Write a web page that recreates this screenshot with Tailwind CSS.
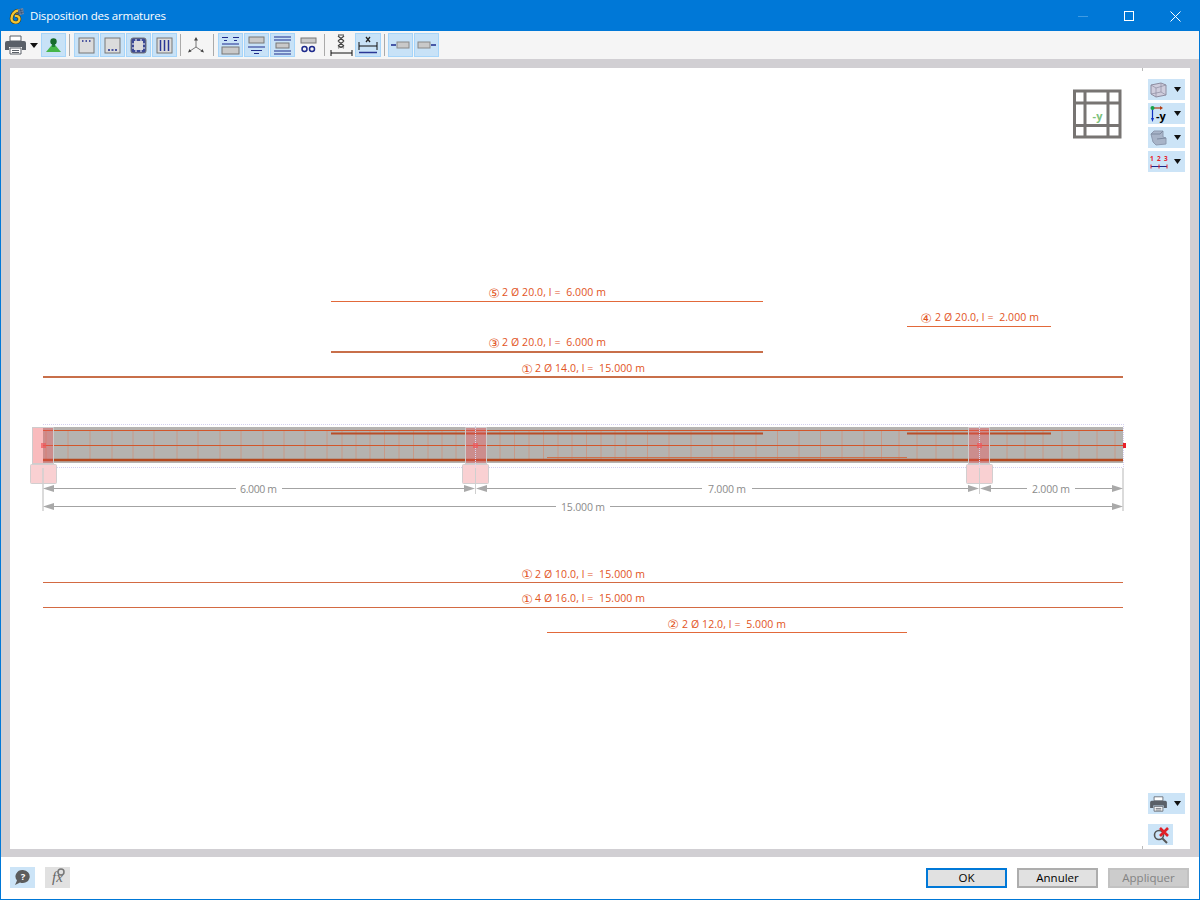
<!DOCTYPE html>
<html lang="fr">
<head>
    <meta charset="UTF-8">
    <title>Disposition des armatures</title>
    <script src="https://cdn.jsdelivr.net/npm/@tailwindcss/browser@4"></script>
</head>
<body class="bg-white font-['Open_Sans',sans-serif]">
<div class="w-[1200px] h-[900px] flex flex-col border border-[#0078d7] bg-white overflow-hidden">

    <!-- Title bar -->
    <div class="h-[30px] shrink-0 bg-[#0078d7] flex items-center text-white">
        <svg class="ml-[8px] w-[15px] h-[16px]" viewBox="0 0 15 16">
            <path d="M6 2l8-2 1 6-7 2z" fill="#6d86a6"/>
            <path d="M6 4l8-2M7 6l8-2M8 1l2 6M11 0.500l2 6" stroke="#2b4a72" stroke-width="0.600"/>
            <path d="M9 2.500C5.500 3 2.500 6.500 2.500 10.500c0 2.500 1.800 4 4 4s4-1.500 4-3.500-2-3.500-4.500-3" fill="none" stroke="#3a3a20" stroke-width="3.600"/>
            <path d="M9 2.500C5.500 3 2.500 6.500 2.500 10.500c0 2.500 1.800 4 4 4s4-1.500 4-3.500-2-3.500-4.500-3" fill="none" stroke="#f4c531" stroke-width="2.400"/>
        </svg>
        <span class="ml-[6px] text-[11.5px] tracking-[-0.2px]">Disposition des armatures</span>
        <div class="ml-auto flex items-center">
            <div class="w-[46px] flex justify-center"><div class="w-[10px] h-px bg-[#3f9be3]"></div></div>
            <div class="w-[46px] flex justify-center"><div class="w-[10px] h-[10px] border border-white"></div></div>
            <div class="w-[46px] mr-[1px] flex justify-center">
                <svg class="w-[11px] h-[11px]" viewBox="0 0 11 11"><path d="M0.500 0.500l10 10M10.500 0.500l-10 10" stroke="#fff" stroke-width="1"/></svg>
            </div>
        </div>
    </div>

    <!-- Toolbar -->
    <div class="h-[28px] shrink-0 bg-[#f5f5f5] flex items-center pl-[4px]">
        <svg class="w-[21px] h-[20px]" viewBox="0 0 21 20">
            <path d="M5 1h11v5H5z" fill="#fff" stroke="#5a6068"/>
            <path d="M2 6h17a2 2 0 0 1 2 2v7h-4v-3H4v3H0V8a2 2 0 0 1 2-2z" fill="#5a6068"/>
            <path d="M5 13h11v6H5z" fill="#fff" stroke="#5a6068"/>
            <path d="M7 15.500h7M7 17.500h7" stroke="#5a6068"/>
        </svg>
        <svg class="ml-[4px] w-[8px] h-[5px]" viewBox="0 0 8 5"><path d="M0 0h8L4 5z" fill="#111"/></svg>
        <div class="ml-[3px] w-[25px] h-[24px] bg-[#c8e2f7] border border-[#a6d5fa] flex items-center justify-center">
            <svg class="w-[17px] h-[17px]" viewBox="0 0 17 17">
                <path d="M8.500 6L16 15H1z" fill="#45b649"/>
                <path d="M7 6h3v4H7z" fill="#1e7d38"/>
                <circle cx="8.500" cy="4.500" r="3.200" fill="#156b2d"/>
            </svg>
        </div>
        <div class="ml-[3px] mr-[4px] w-px h-[22px] bg-[#aaa]"></div>
        <div class="flex gap-px">
            <div class="w-[25px] h-[24px] bg-[#c8e2f7] border border-[#a6d5fa] flex items-center justify-center">
                <svg class="w-[17px] h-[17px]" viewBox="0 0 17 17"><rect x="1" y="1" width="15" height="15" fill="#dcdcdc" stroke="#777"/><path d="M4 4h2M7.500 4h2M11 4h2" stroke="#1d2a8c" stroke-width="1.500" stroke-dasharray="1.500 0.500"/></svg>
            </div>
            <div class="w-[25px] h-[24px] bg-[#c8e2f7] border border-[#a6d5fa] flex items-center justify-center">
                <svg class="w-[17px] h-[17px]" viewBox="0 0 17 17"><rect x="1" y="1" width="15" height="15" fill="#dcdcdc" stroke="#777"/><path d="M4 13h2M7.500 13h2M11 13h2" stroke="#1d2a8c" stroke-width="1.500"/></svg>
            </div>
            <div class="w-[25px] h-[24px] bg-[#c8e2f7] border border-[#a6d5fa] flex items-center justify-center">
                <svg class="w-[17px] h-[17px]" viewBox="0 0 17 17"><rect x="1" y="1" width="15" height="15" rx="2" fill="#3c4a96" stroke="#777"/><rect x="4" y="4" width="9" height="9" fill="#dcdcdc"/><path d="M5 3h2M10 3h2M5 14h2M10 14h2M3 6v2M3 10v2M14 6v2M14 10v2" stroke="#fff"/></svg>
            </div>
            <div class="w-[25px] h-[24px] bg-[#c8e2f7] border border-[#a6d5fa] flex items-center justify-center">
                <svg class="w-[17px] h-[17px]" viewBox="0 0 17 17"><rect x="1" y="1" width="15" height="15" fill="#dcdcdc" stroke="#777"/><path d="M4.500 3v11M8.500 3v11M12.500 3v11" stroke="#2a3796" stroke-width="1.500"/></svg>
            </div>
        </div>
        <div class="ml-[3px] w-px h-[22px] bg-[#aaa]"></div>
        <svg class="ml-[5px] w-[20px] h-[18px]" viewBox="0 0 20 18"><path d="M10 11V3M10 11l-6 4M10 11l6 4" stroke="#777" fill="none"/><path d="M10 1l2 3.500H8zM2 16.500l1.500-3.500 2 2.500zM18 16.500l-1.500-3.500-2 2.500z" fill="#444"/></svg>
        <div class="ml-[7px] w-px h-[22px] bg-[#aaa]"></div>
        <div class="ml-[4px] flex gap-px">
            <div class="w-[25px] h-[24px] bg-[#c8e2f7] border border-[#a6d5fa] flex items-center justify-center">
                <svg class="w-[19px] h-[19px]" viewBox="0 0 19 19"><path d="M1 1.500h6M12 1.500h6M3 4.500h3M13 4.500h3M1 8h17" stroke="#1d2a8c"/><rect x="1" y="11" width="17" height="7" fill="#c9c9c9" stroke="#777"/></svg>
            </div>
            <div class="w-[25px] h-[24px] bg-[#c8e2f7] border border-[#a6d5fa] flex items-center justify-center">
                <svg class="w-[19px] h-[19px]" viewBox="0 0 19 19"><rect x="2" y="1" width="15" height="6" fill="#c9c9c9" stroke="#777"/><path d="M1 11h17M4 14.500h11M7 17.500h5" stroke="#1d2a8c"/></svg>
            </div>
            <div class="w-[25px] h-[24px] bg-[#c8e2f7] border border-[#a6d5fa] flex items-center justify-center">
                <svg class="w-[19px] h-[19px]" viewBox="0 0 19 19"><path d="M1 1h17M1 4h17M1 15h17M1 18h17" stroke="#1d2a8c"/><rect x="3" y="7" width="13" height="5" fill="#c9c9c9" stroke="#777"/></svg>
            </div>
            <div class="w-[25px] h-[24px] flex items-center justify-center">
                <svg class="w-[19px] h-[19px]" viewBox="0 0 19 19"><rect x="2" y="2" width="15" height="5" fill="#c9c9c9" stroke="#777"/><circle cx="5.500" cy="13" r="2.500" fill="none" stroke="#1d2a8c" stroke-width="1.500"/><circle cx="13" cy="13" r="2.500" fill="none" stroke="#1d2a8c" stroke-width="1.500"/></svg>
            </div>
        </div>
        <div class="ml-[3px] w-px h-[22px] bg-[#aaa]"></div>
        <svg class="ml-[5px] w-[23px] h-[22px]" viewBox="0 0 23 22"><path d="M8 2l6 5M14 2L8 7M8 7l6 5M14 7l-6 5M8 12l6 2M14 12l-6 2M8 1h6" stroke="#444" stroke-width="1.200"/><path d="M1 16v6M22 16v6M1 19h21" stroke="#111"/></svg>
        <div class="ml-[2px] w-[26px] h-[24px] bg-[#c8e2f7] border border-[#a6d5fa] flex items-center justify-center">
            <svg class="w-[20px] h-[18px]" viewBox="0 0 20 18"><path d="M8 1l4 5M12 1L8 6" stroke="#222" stroke-width="1.300"/><path d="M1 6v8M19 6v8M1 10h18" stroke="#111"/><path d="M1 16.500h18" stroke="#2a3796" stroke-width="1.500"/></svg>
        </div>
        <div class="ml-[3px] w-px h-[22px] bg-[#aaa]"></div>
        <div class="ml-[3px] flex gap-px">
            <div class="w-[25px] h-[24px] bg-[#c8e2f7] border border-[#a6d5fa] flex items-center justify-center">
                <svg class="w-[19px] h-[10px]" viewBox="0 0 19 10"><path d="M0 5h5" stroke="#1d2a8c" stroke-width="1.500"/><rect x="6" y="2" width="12" height="6" fill="#c9c9c9" stroke="#888"/></svg>
            </div>
            <div class="w-[25px] h-[24px] bg-[#c8e2f7] border border-[#a6d5fa] flex items-center justify-center">
                <svg class="w-[19px] h-[10px]" viewBox="0 0 19 10"><rect x="1" y="2" width="12" height="6" fill="#c9c9c9" stroke="#888"/><path d="M14 5h5" stroke="#1d2a8c" stroke-width="1.500"/></svg>
            </div>
        </div>
    </div>

    <!-- Drawing area -->
    <div class="flex-1 min-h-0 bg-[#d1cfd3] pt-[9px] pl-[9px] pr-[9px]">
        <div class="relative w-[1180px] h-[781px] bg-white">
            <svg class="absolute inset-0 font-['Open_Sans',sans-serif]" width="1180" height="781" viewBox="10 68 1180 781">
                <!-- bar schedule -->
                <g fill="#e2541d" font-size="10.500">
                    <text x="502" y="296" textLength="104">2 Ø 20.0, l =&#160; 6.000 m</text>
                    <text x="935" y="321" textLength="104">2 Ø 20.0, l =&#160; 2.000 m</text>
                    <text x="502" y="346" textLength="104">2 Ø 20.0, l =&#160; 6.000 m</text>
                    <text x="535" y="372" textLength="110">2 Ø 14.0, l =&#160; 15.000 m</text>
                    <text x="535" y="577.500" textLength="110">2 Ø 10.0, l =&#160; 15.000 m</text>
                    <text x="535" y="602" textLength="110">4 Ø 16.0, l =&#160; 15.000 m</text>
                    <text x="682" y="627.500" textLength="104">2 Ø 12.0, l =&#160; 5.000 m</text>
                </g>
                <g fill="#e2541d" font-size="13" text-anchor="middle" font-family="'DejaVu Sans'">
                    <text x="494" y="297.500">⑤</text>
                    <text x="926" y="322.500">④</text>
                    <text x="494" y="347.500">③</text>
                    <text x="527" y="373.500">①</text>
                    <text x="527" y="579">①</text>
                    <text x="527" y="603.500">①</text>
                    <text x="673" y="629">②</text>
                </g>
                <path d="M331 301.500h432M907 326.500h144M547 632.500h360" stroke="#e2693a"/>
                <path d="M43 582.500h1080M43 607.500h1080" stroke="#d36a42"/>
                <path d="M331 352h432M43 377h1080" stroke="#c86f4a" stroke-width="2"/>

                <!-- beam -->
                <path d="M43 424.500h1080M43 467.500h1080M1123.500 424v44" stroke="#d4d0f0" stroke-dasharray="1 1"/>
                <rect x="43" y="427" width="1080" height="36" fill="#b5b3b0"/>
                <path d="M46 431V460M68 431V460M90 431V460M112 431V460M133 431V460M154 431V460M177 431V460M198 431V460M220 431V460M241 431V460M263 431V460M284 431V460M305 431V460M327 431V460M342 431V460M356 431V460M370 431V460M384.500 431V460M399 431V460M413.500 431V460M428 431V460M442 431V460M456 431V460M500 431V460M514.500 431V460M529 431V460M543.500 431V460M558 431V460M572 431V460M586.500 431V460M601 431V460M615 431V460M626 431V460M647.500 431V460M669 431V460M691 431V460M712 431V460M734 431V460M756 431V460M777.500 431V460M799 431V460M820.500 431V460M842 431V460M864 431V460M881.500 431V460M899 431V460M917 431V460M936 431V460M953 431V460M1007 431V460M1025 431V460M1043 431V460M1062 431V460M1079 431V460M1097 431V460M1115 431V460" stroke="#c79a88"/>
                <path d="M43 430.500h1080M43 445.500h1080" stroke="#d2562a"/>
                <path d="M331 433.500h432M907 433.500h144" stroke="#b84e28" stroke-width="2"/>
                <path d="M547 457.500h360" stroke="#d0704a"/>
                <path d="M43 460h1080" stroke="#b5481e" stroke-width="2.500"/>

                <!-- supports -->
                <g fill="#f0555a" fill-opacity="0.4" stroke="#cfcbcc">
                    <rect x="32.500" y="427.500" width="21" height="36"/>
                    <rect x="465.500" y="427.500" width="21" height="36"/>
                    <rect x="968.500" y="427.500" width="21" height="36"/>
                </g>
                <g fill="#f9d0d2" stroke="#d2cecf">
                    <rect x="30.500" y="464.500" width="26" height="19" rx="1"/>
                    <rect x="462.500" y="464.500" width="26" height="19" rx="1"/>
                    <rect x="966.500" y="464.500" width="26" height="19" rx="1"/>
                </g>
                <path d="M475.500 424v44M979.500 424v44" stroke="#d9d6f0" stroke-dasharray="1 1"/>
                <g fill="#f0555a" fill-opacity="0.7">
                    <rect x="41" y="443" width="5" height="5"/>
                    <rect x="473" y="443" width="5" height="5"/>
                    <rect x="977" y="443" width="5" height="5"/>
                </g>
                <rect x="1123" y="443" width="3" height="5" fill="#e8202a"/>

                <!-- dimensions -->
                <path d="M43 468v43M1123 468v43" stroke="#cfcfcf" stroke-width="1.500"/>
                <path d="M475.500 468v26M979.500 468v26" stroke="#cfcfcf"/>
                <path d="M53 488.500h183M282 488.500h183M486 488.500h216M752 488.500h216M990 488.500h37M1075 488.500h38M53 506.500h503M610 506.500h503" stroke="#a3a3a3"/>
                <path d="M43 488.500l11-3.500v7zM475 488.500l-11-3.500v7zM476 488.500l11-3.500v7zM979 488.500l-11-3.500v7zM980 488.500l11-3.500v7zM1123 488.500l-11-3.500v7zM43 506.500l11-3.500v7zM1123 506.500l-11-3.500v7z" fill="#a9a9a9"/>
                <g fill="#8b8b8b" font-size="10.500" text-anchor="middle">
                    <text x="258.500" y="492.500" textLength="37">6.000 m</text>
                    <text x="727" y="492.500" textLength="38">7.000 m</text>
                    <text x="1051" y="492.500" textLength="38">2.000 m</text>
                    <text x="583" y="510.500" textLength="44">15.000 m</text>
                </g>

                <!-- view cube -->
                <path d="M1074.500 91h45.500v46h-45.500zM1085 91v46M1108 91v46M1074.500 103h45.500M1074.500 125.500h45.500" fill="none" stroke="#777472" stroke-width="3"/>
                <text x="1097.500" y="120" font-size="11" font-weight="700" fill="#7cc27c" text-anchor="middle">-y</text>

                <path d="M1142.500 68v3M1142.500 846v3" stroke="#bbb"/>
            </svg>

            <!-- view controls, right -->
            <div class="absolute left-[1138px] top-[11px] flex flex-col gap-[3px]">
                <div class="w-[37px] h-[21px] bg-[#cce4f7] flex items-center justify-between pl-[2px] pr-[4px]">
                    <svg class="w-[17px] h-[17px]" viewBox="0 0 17 17"><path d="M1 4l10-2 5 2v10l-10 2-5-3z" fill="#cfcddd" stroke="#8d8ca0"/><path d="M1 4l5 3 10-3M6 7v9M11 2v9l-10 2M11 11l5 3" fill="none" stroke="#8d8ca0" stroke-width="0.700"/></svg>
                    <svg class="w-[7px] h-[5px]" viewBox="0 0 7 5"><path d="M0 0h7L3.500 5z" fill="#111"/></svg>
                </div>
                <div class="w-[37px] h-[21px] bg-[#cce4f7] flex items-center justify-between pl-[2px] pr-[4px]">
                    <div class="flex items-end">
                        <svg class="w-[13px] h-[17px]" viewBox="0 0 13 17"><path d="M2.500 3h8" stroke="#b03a10" stroke-width="1.200"/><path d="M2.500 3v11" stroke="#1030c0" stroke-width="1.200"/><path d="M13 3l-3-2v4z" fill="#b03a10"/><path d="M2.500 17L1 13h3z" fill="#1030c0"/><circle cx="2.500" cy="3" r="2" fill="#16a34a"/></svg>
                        <span class="-ml-[7px] text-[11px] leading-[13px] font-bold text-black">-y</span>
                    </div>
                    <svg class="w-[7px] h-[5px]" viewBox="0 0 7 5"><path d="M0 0h7L3.500 5z" fill="#111"/></svg>
                </div>
                <div class="w-[37px] h-[21px] bg-[#cce4f7] flex items-center justify-between pl-[2px] pr-[4px]">
                    <svg class="w-[17px] h-[17px]" viewBox="0 0 17 17"><path d="M1 5l3-3h9v6l3 1v6l-10 1-3-3z" fill="#a8b4c8" stroke="#8d9ab0"/><path d="M1 5h9l3-3M7 10l9-1" fill="none" stroke="#7d8aa0"/></svg>
                    <svg class="w-[7px] h-[5px]" viewBox="0 0 7 5"><path d="M0 0h7L3.500 5z" fill="#111"/></svg>
                </div>
                <div class="w-[37px] h-[21px] bg-[#cce4f7] flex items-center justify-between pl-[2px] pr-[4px]">
                    <svg class="w-[18px] h-[15px]" viewBox="0 0 18 15"><text x="0" y="7" font-size="6.500" font-weight="700" fill="#e8202a">1</text><text x="7" y="7" font-size="6.500" font-weight="700" fill="#e8202a">2</text><text x="14" y="7" font-size="6.500" font-weight="700" fill="#e8202a">3</text><path d="M1 12.500h16" stroke="#1d2a8c"/><path d="M1 10.500v4M9 10.500v4M17 10.500v4" stroke="#e8202a"/></svg>
                    <svg class="w-[7px] h-[5px]" viewBox="0 0 7 5"><path d="M0 0h7L3.500 5z" fill="#111"/></svg>
                </div>
            </div>

            <!-- print / reset, bottom right -->
            <div class="absolute left-[1138px] top-[725px] flex flex-col items-start gap-[10px]">
                <div class="w-[37px] h-[21px] bg-[#cce4f7] flex items-center justify-between pl-[2px] pr-[4px]">
                    <svg class="w-[17px] h-[16px]" viewBox="0 0 21 20">
                        <path d="M5 1h11v5H5z" fill="#fff" stroke="#5a6068"/>
                        <path d="M2 6h17a2 2 0 0 1 2 2v7h-4v-3H4v3H0V8a2 2 0 0 1 2-2z" fill="#5a6068"/>
                        <path d="M5 13h11v6H5z" fill="#fff" stroke="#5a6068"/>
                        <path d="M7 15.500h7M7 17.500h7" stroke="#5a6068"/>
                    </svg>
                    <svg class="w-[7px] h-[5px]" viewBox="0 0 7 5"><path d="M0 0h7L3.500 5z" fill="#111"/></svg>
                </div>
                <div class="w-[25px] h-[21px] bg-[#cce4f7] flex items-center justify-center">
                    <svg class="w-[18px] h-[18px]" viewBox="0 0 18 18">
                        <circle cx="7" cy="9" r="4.500" fill="none" stroke="#555" stroke-width="1.600"/>
                        <path d="M10.500 12.500l4.500 4.500" stroke="#555" stroke-width="2"/>
                        <path d="M8 2l8 8M16 2l-8 8" stroke="#e01f26" stroke-width="2.600"/>
                    </svg>
                </div>
            </div>
        </div>
    </div>

    <!-- Footer -->
    <div class="h-[42px] shrink-0 bg-white flex items-start pt-[10px] pl-[9px]">
        <div class="w-[25px] h-[21px] bg-[#cce4f7] flex items-center justify-center">
            <svg class="w-[17px] h-[17px]" viewBox="0 0 17 17">
                <path d="M9 1a7 6.500 0 1 1-3 12.500L1 16l2-4.500A7 6.500 0 0 1 9 1z" fill="#5c5c5c"/>
                <text x="9" y="11" font-size="9.500" font-weight="700" fill="#fff" text-anchor="middle">?</text>
            </svg>
        </div>
        <div class="ml-[10px] w-[25px] h-[21px] bg-[#e1e1e1] flex items-center justify-center relative">
            <span class="font-['Liberation_Serif',serif] italic text-[15px] leading-[15px] text-[#666]">fx</span>
            <svg class="absolute right-[5px] top-[1px] w-[8px] h-[8px]" viewBox="0 0 8 8"><circle cx="4" cy="4" r="3" fill="none" stroke="#777" stroke-width="1.500"/></svg>
        </div>
        <div class="ml-auto mr-[10px] mt-px flex gap-[10px] text-[11.5px]">
            <button class="w-[81px] h-[20px] bg-[#e1e1e1] border-2 border-[#0078d7] text-black flex items-center justify-center">OK</button>
            <button class="w-[81px] h-[20px] bg-[#e1e1e1] border-2 border-[#adadad] text-black flex items-center justify-center">Annuler</button>
            <button class="w-[81px] h-[20px] bg-[#cccccc] border-2 border-[#c2c2c2] text-[#838383] flex items-center justify-center">Appliquer</button>
        </div>
    </div>
</div>
</body>
</html>
